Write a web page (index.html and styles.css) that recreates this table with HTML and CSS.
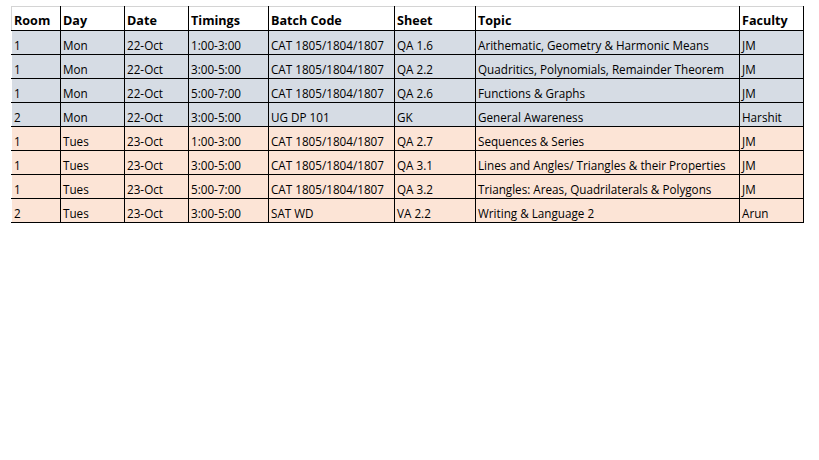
FILE: index.html
```html
<!DOCTYPE html>
<html>
<head>
<meta charset="utf-8">
<link rel="stylesheet" href="styles.css">
</head>
<body>
<table class="sched">
  <colgroup>
    <col class="c-room"><col class="c-day"><col class="c-date"><col class="c-time"><col class="c-batch"><col class="c-sheet"><col class="c-topic"><col class="c-fac">
  </colgroup>
  <thead>
    <tr><th>Room</th><th>Day</th><th>Date</th><th>Timings</th><th>Batch Code</th><th>Sheet</th><th>Topic</th><th>Faculty</th></tr>
  </thead>
  <tbody>
    <tr class="mon"><td>1</td><td>Mon</td><td>22-Oct</td><td>1:00-3:00</td><td>CAT 1805/1804/1807</td><td>QA 1.6</td><td>Arithematic, Geometry &amp; Harmonic Means</td><td>JM</td></tr>
    <tr class="mon"><td>1</td><td>Mon</td><td>22-Oct</td><td>3:00-5:00</td><td>CAT 1805/1804/1807</td><td>QA 2.2</td><td>Quadritics, Polynomials, Remainder Theorem</td><td>JM</td></tr>
    <tr class="mon"><td>1</td><td>Mon</td><td>22-Oct</td><td>5:00-7:00</td><td>CAT 1805/1804/1807</td><td>QA 2.6</td><td>Functions &amp; Graphs</td><td>JM</td></tr>
    <tr class="mon"><td>2</td><td>Mon</td><td>22-Oct</td><td>3:00-5:00</td><td>UG DP 101</td><td>GK</td><td>General Awareness</td><td>Harshit</td></tr>
    <tr class="tue"><td>1</td><td>Tues</td><td>23-Oct</td><td>1:00-3:00</td><td>CAT 1805/1804/1807</td><td>QA 2.7</td><td>Sequences &amp; Series</td><td>JM</td></tr>
    <tr class="tue"><td>1</td><td>Tues</td><td>23-Oct</td><td>3:00-5:00</td><td>CAT 1805/1804/1807</td><td>QA 3.1</td><td>Lines and Angles/ Triangles &amp; their Properties</td><td>JM</td></tr>
    <tr class="tue"><td>1</td><td>Tues</td><td>23-Oct</td><td>5:00-7:00</td><td>CAT 1805/1804/1807</td><td>QA 3.2</td><td>Triangles: Areas, Quadrilaterals &amp; Polygons</td><td>JM</td></tr>
    <tr class="tue"><td>2</td><td>Tues</td><td>23-Oct</td><td>3:00-5:00</td><td>SAT WD</td><td>VA 2.2</td><td>Writing &amp; Language 2</td><td>Arun</td></tr>
  </tbody>
</table>
</body>
</html>
```
FILE: styles.css
```css
html, body {
  margin: 0;
  padding: 0;
  background: #ffffff;
}
body {
  padding: 6px 0 0 11px;
  font-family: "Open Sans", "Noto Sans", sans-serif;
  color: #000;
}
.sched {
  border-collapse: collapse;
  table-layout: fixed;
  width: 792px;
}
.c-room { width: 49px; }
.c-day { width: 64px; }
.c-date { width: 64px; }
.c-time { width: 80px; }
.c-batch { width: 126px; }
.c-sheet { width: 81px; }
.c-topic { width: 264px; }
.c-fac { width: 64px; }
.sched th, .sched td {
  border: 1px solid #000;
  text-align: left;
  vertical-align: bottom;
  white-space: nowrap;
  overflow: hidden;
  padding: 0 0 1px 2px;
  box-sizing: border-box;
}
.sched th {
  height: 24px;
  font-size: 12.6px;
  font-weight: 700;
  border-top-color: #d4d4d4;
  background: #fff;
}
.sched td {
  height: 24px;
  font-size: 11.7px;
}
.sched th:first-child {
  border-left-color: #d4d4d4;
}
.sched td:first-child {
  border-left-color: transparent;
}
.mon td { background: #d6dce4; }
.tue td { background: #fce4d6; }
```
